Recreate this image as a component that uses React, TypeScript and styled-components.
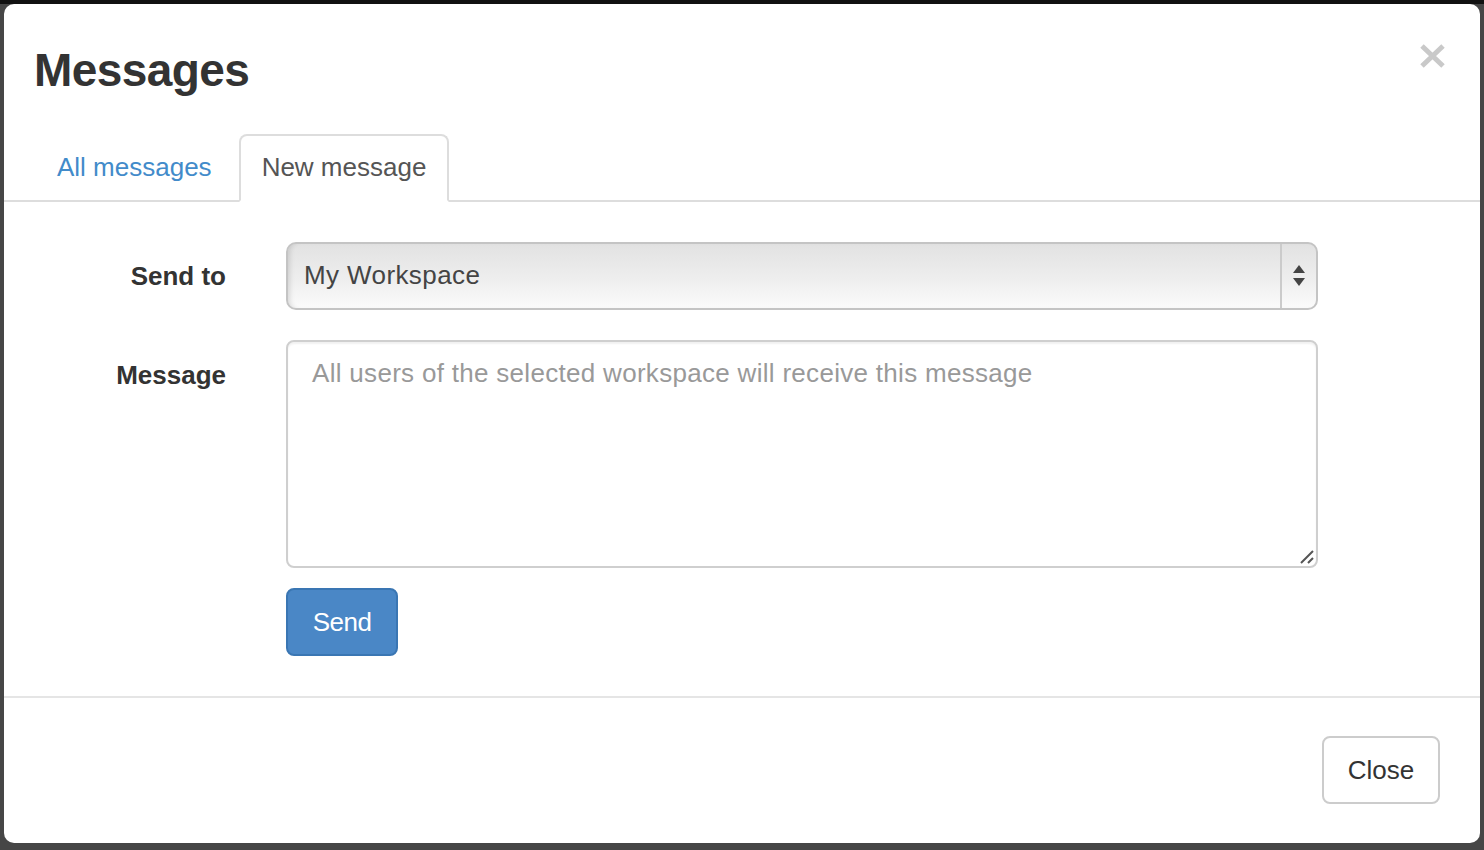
import { FC } from "react";
import styled, { createGlobalStyle } from "styled-components";

const GlobalStyle = createGlobalStyle`
  html, body {
    margin: 0;
    height: 850px;
    overflow: hidden;
  }
  body {
    padding: 4px;
    box-sizing: border-box;
    background: linear-gradient(#111 0 4px, #464646 4px);
    font-family: "Liberation Sans", Arial, sans-serif;
    color: #333;
  }
`;

const Modal = styled.div`
  width: 1476px;
  background: #fff;
  border-radius: 10px;
  display: flex;
  flex-direction: column;
`;

const Header = styled.div`
  display: flex;
  justify-content: space-between;
  align-items: flex-start;
  padding: 40px 33px 0 30px;
`;

const Title = styled.h1`
  margin: 0;
  font-size: 46px;
  line-height: 52px;
  font-weight: 700;
  color: #333;
  letter-spacing: -0.6px;
`;

const CloseX = styled.button`
  border: 0;
  padding: 0;
  margin-top: -1px;
  background: none;
  cursor: pointer;
  display: flex;
`;

const Tabs = styled.ul`
  list-style: none;
  margin: 38px 0 0;
  padding: 0 0 0 30px;
  display: flex;
  border-bottom: 2px solid #ddd;
`;

const Tab = styled.li<{ $active?: boolean }>`
  margin: 0 4px -2px 0;
  padding: 0 21px 2px;
  height: 62px;
  line-height: 62px;
  font-size: 26px;
  border: 2px solid ${(p) => (p.$active ? "#ddd" : "transparent")};
  border-bottom-color: ${(p) => (p.$active ? "#fff" : "transparent")};
  border-radius: 8px 8px 0 0;
  background: ${(p) => (p.$active ? "#fff" : "transparent")};
  color: ${(p) => (p.$active ? "#555" : "#428bca")};
  cursor: pointer;
`;

const Body = styled.div`
  padding: 40px 0 40px 30px;
  display: flex;
  flex-direction: column;
  gap: 30px;
`;

const FormRow = styled.div`
  display: flex;
  align-items: flex-start;
`;

const Label = styled.label<{ $tall?: boolean }>`
  width: 192px;
  margin-right: 60px;
  text-align: right;
  font-weight: 700;
  font-size: 26px;
  color: #333;
  line-height: ${(p) => (p.$tall ? "36px" : "68px")};
  padding-top: ${(p) => (p.$tall ? "17px" : "0")};
`;

const Field = styled.div`
  width: 1032px;
  display: flex;
  flex-direction: column;
  align-items: flex-start;
`;

const SelectBox = styled.div`
  width: 100%;
  height: 68px;
  box-sizing: border-box;
  display: flex;
  border: 2px solid #c4c4c4;
  border-radius: 10px;
  background: linear-gradient(#e2e2e2, #eeeeee 55%, #fbfbfb);
  box-shadow: inset 5px 0 5px -3px rgba(0, 0, 0, 0.12);
  overflow: hidden;
  cursor: default;
`;

const SelectValue = styled.span`
  flex: 1;
  padding-left: 16px;
  font-size: 26px;
  line-height: 62px;
  letter-spacing: 0.4px;
  color: #444;
`;

const SelectArrows = styled.span`
  width: 34px;
  border-left: 2px solid #cbcbcb;
  display: flex;
  align-items: center;
  justify-content: center;
`;

const TextWrap = styled.div`
  position: relative;
  width: 100%;
  height: 228px;
`;

const TextArea = styled.textarea`
  width: 100%;
  height: 100%;
  box-sizing: border-box;
  border: 2px solid #cfcfcf;
  border-radius: 8px;
  padding: 13px 24px;
  font-family: "Liberation Sans", Arial, sans-serif;
  font-size: 26px;
  line-height: 36px;
  letter-spacing: 0.3px;
  color: #555;
  resize: none;
  outline: none;
  box-shadow: inset 0 2px 2px rgba(0, 0, 0, 0.06);
  &::placeholder {
    color: #999;
  }
`;

const Grip = styled.svg`
  position: absolute;
  right: 3px;
  bottom: 3px;
`;

const Button = styled.button<{ $primary?: boolean }>`
  height: 68px;
  padding: 0 26px;
  box-sizing: border-box;
  font-family: "Liberation Sans", Arial, sans-serif;
  font-size: 26px;
  border-radius: 8px;
  cursor: pointer;
  border: 2px solid ${(p) => (p.$primary ? "#3a76b3" : "#ccc")};
  background: ${(p) => (p.$primary ? "#4a87c6" : "#fff")};
  color: ${(p) => (p.$primary ? "#fff" : "#333")};
`;

const SendButton = styled(Button)`
  margin-top: 20px;
  width: 112px;
  padding: 0;
  letter-spacing: -0.5px;
`;

const Footer = styled.div`
  border-top: 2px solid #e5e5e5;
  padding: 38px 40px 39px;
  display: flex;
  justify-content: flex-end;
`;

const CloseButton = styled(Button)`
  width: 118px;
  padding: 0;
`;

const App: FC = () => (
  <>
    <GlobalStyle />
    <Modal>
      <Header>
        <Title>Messages</Title>
        <CloseX aria-label="Close">
          <svg width="29" height="26" viewBox="0 0 29 26">
            <path d="M4 3 L25 23 M25 3 L4 23" stroke="#c9c9c9" strokeWidth="5" />
          </svg>
        </CloseX>
      </Header>
      <Tabs>
        <Tab>All messages</Tab>
        <Tab $active>New message</Tab>
      </Tabs>
      <Body>
        <FormRow>
          <Label>Send to</Label>
          <Field>
            <SelectBox>
              <SelectValue>My Workspace</SelectValue>
              <SelectArrows>
                <svg width="12" height="22" viewBox="0 0 12 22">
                  <path d="M6 0 L12 8 L0 8 Z M0 13 L12 13 L6 21 Z" fill="#444" />
                </svg>
              </SelectArrows>
            </SelectBox>
          </Field>
        </FormRow>
        <FormRow>
          <Label $tall>Message</Label>
          <Field>
            <TextWrap>
              <TextArea placeholder="All users of the selected workspace will receive this message" />
              <Grip width="16" height="16" viewBox="0 0 16 16">
                <path d="M2 14 L14 2 M9 14 L14 9" stroke="#555" strokeWidth="2" />
              </Grip>
            </TextWrap>
            <SendButton $primary>Send</SendButton>
          </Field>
        </FormRow>
      </Body>
      <Footer>
        <CloseButton>Close</CloseButton>
      </Footer>
    </Modal>
  </>
);

export default App;
